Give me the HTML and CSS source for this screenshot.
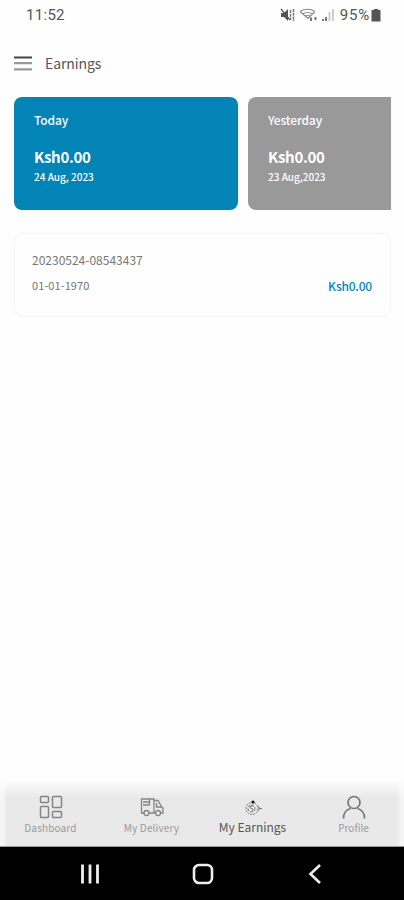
FILE: index.html
```
<!DOCTYPE html>
<html lang="en">
<head>
<meta charset="utf-8">
<title>Earnings</title>
<link rel="stylesheet" href="styles.css">
</head>
<body>
<div class="status">
  <span class="clock">11:52</span>
  <div class="indicators">
    <svg class="mute" width="16" height="14" viewBox="0 0 16 14"><path d="M1 5h3l4-4v12L4 9H1z" fill="#555"/><path d="M1 1l9 11" stroke="#555" stroke-width="1.3"/><path d="M10.500 2v10M13.500 1v12" stroke="#777" stroke-width="1.500" stroke-dasharray="3 .7"/></svg>
    <svg class="wifi" width="19" height="14" viewBox="0 0 19 14" fill="none" stroke="#888" stroke-width="1.200"><path d="M1 3.500q7.500-4.500 15 0M3.500 6q5-3 10 0M6 8.500q3-2 5 0M1 3.500l8 7 7-7"/><path d="M12 9.500v3.500M16.500 9v3" stroke="#666" stroke-width="1.800"/></svg>
    <svg class="signal" width="14" height="14" viewBox="0 0 14 14"><path d="M1 11h2v2H1zM4 9h2v4H4z" fill="#777"/><path d="M7.500 4h2v9h-2zM11 1h2v12h-2z" fill="#ccc"/></svg>
    <span class="percent">95%</span>
    <svg class="battery" width="10" height="14" viewBox="0 0 10 14"><path d="M3 1h4v1h2.500v11.500H.5V2H3z" fill="#555"/></svg>
  </div>
</div>
<header>
  <svg width="18" height="15" viewBox="0 0 18 15"><path d="M0 1.500h18" stroke="#444" stroke-width="2"/><path d="M0 7.200h18M0 13.300h18" stroke="#999" stroke-width="2.200"/></svg>
  <h1>Earnings</h1>
</header>
<main>
  <div class="cards">
    <section class="card today"><p class="day">Today</p><p class="amount">Ksh0.00</p><p class="date">24 Aug, 2023</p></section>
    <section class="card yesterday"><p class="day">Yesterday</p><p class="amount">Ksh0.00</p><p class="date">23 Aug,2023</p></section>
  </div>
  <section class="entry">
    <p class="ref">20230524-08543437</p>
    <div class="line"><span class="when">01-01-1970</span><span class="sum">Ksh0.00</span></div>
  </section>
</main>
<nav class="tabs">
  <div class="tab"><svg width="24" height="24" viewBox="0 0 24 24" fill="none" stroke="#858585" stroke-width="1.500"><rect x="1.500" y="1.500" width="8" height="6" rx="1"/><rect x="13.500" y="1.500" width="9" height="11" rx="1"/><rect x="1.500" y="11.500" width="8" height="11" rx="1"/><rect x="13.500" y="16.500" width="9" height="6" rx="1"/></svg><span>Dashboard</span></div>
  <div class="tab"><svg width="24" height="24" viewBox="0 0 24 24" fill="none" stroke="#858585" stroke-width="1.300"><path d="M4 18H1.500V4H14v14H9M14 5.500h4l3.500 6 1.500 1.500V18h-2M14 18h2M16.500 8v4h5M3 7h6.500M3 10h6.500M9.500 4v6"/><circle cx="6.500" cy="18" r="2.500"/><circle cx="18" cy="18" r="2.500"/></svg><span class="delivery">My Delivery</span></div>
  <div class="tab active"><svg width="24" height="24" viewBox="0 0 24 24" fill="none" stroke="#777"><circle cx="11" cy="13.500" r="6" stroke-dasharray="2 1"/><circle cx="10.500" cy="13.500" r="3.500" stroke-dasharray="3 1"/><path d="M12 11q-3-.5-3 1t2 1.500 0 3M16.500 11.500l3 2-3 2M18.500 13.500h2.500"/><circle cx="12" cy="7" r="1.600" fill="#111" stroke="none"/></svg><span>My Earnings</span></div>
  <div class="tab"><svg width="24" height="24" viewBox="0 0 24 24" fill="none" stroke="#777" stroke-width="1.700"><circle cx="12" cy="7.500" r="6"/><path d="M1.500 23.500c0-6 3-9 7-10M22.500 23.500c0-6-3-9-7-10"/></svg><span>Profile</span></div>
</nav>
<div class="system">
  <svg width="20" height="20" viewBox="0 0 20 20"><path d="M2.500.5v19M10 .5v19M17.500.5v19" stroke="#eee" stroke-width="2.800"/></svg>
  <svg width="22" height="22" viewBox="0 0 22 22"><rect x="2" y="2" width="18" height="18" rx="5" fill="none" stroke="#eee" stroke-width="2.600"/></svg>
  <svg width="14" height="20" viewBox="0 0 14 20"><path d="M12 1L2.500 10l9.500 9" fill="none" stroke="#eee" stroke-width="2.600"/></svg>
</div>
</body>
</html>
```
FILE: styles.css
```
* { box-sizing: border-box; margin: 0; padding: 0; }
body { width: 404px; height: 900px; display: flex; flex-direction: column; overflow: hidden; background: #fefefe; font-family: "Noto Sans CJK SC", "Noto Sans", sans-serif; color: #555; white-space: nowrap; }
svg { display: block; flex: none; }
.status { height: 30px; padding: 0 23px 0 26px; display: flex; justify-content: space-between; align-items: center; font-family: Roboto, sans-serif; font-size: 15px; letter-spacing: .3px; }
.indicators { display: flex; align-items: center; }
.indicators svg { margin-top: -1px; }
.wifi { margin-left: 3px; }
.signal { margin-left: 3px; }
.percent { margin-left: 5px; letter-spacing: .8px; }
.battery { margin-left: 1px; }
header { height: 67px; padding: 0 14px; display: flex; align-items: center; gap: 13px; }
h1 { margin-top: -2px; font-size: 14px; line-height: 20px; font-weight: 400; letter-spacing: -.1px; }
main { flex: 1; padding: 0 13px 0 14px; }
.cards { display: flex; gap: 10px; overflow: hidden; }
.card { flex: none; width: 224px; height: 113px; border-radius: 8px; padding: 13px 20px 0; color: #fff; }
.today { background: #0284b7; }
.yesterday { background: #999; }
.day { font-size: 12px; line-height: 20px; font-weight: 500; letter-spacing: -.15px; }
.amount { margin-top: 16px; font-size: 15px; line-height: 22px; font-weight: 700; letter-spacing: -.3px; }
.date { font-size: 10px; line-height: 18px; font-weight: 500; }
.entry { margin-top: 23px; height: 84px; border: 1px solid #f5f5f5; border-radius: 9px; padding: 16px 18px 0 17px; box-shadow: 0 0 2px #f7f7f7; }
.ref { font-size: 12px; line-height: 20px; color: #777; }
.line { margin-top: 6px; display: flex; justify-content: space-between; line-height: 20px; }
.when { margin-top: -1px; font-size: 11px; color: #777; letter-spacing: .1px; }
.sum { font-size: 12px; font-weight: 500; color: #0284b7; letter-spacing: -.2px; }
.tabs { height: 67px; padding-top: 15px; display: grid; grid-template-columns: repeat(4, 101px); background: linear-gradient(#fefefe, rgba(245,245,245,0) 18px), linear-gradient(90deg, #f5f5f5 3px, #e9e9e9 7px, #e9e9e9 397px, #f5f5f5 401px); border-bottom: 1px solid #999; }
.tab { display: flex; flex-direction: column; align-items: center; font-size: 10px; line-height: 20px; color: #999; }
.tab span { margin-top: -1px; }
.tab:first-child span, .delivery { letter-spacing: .15px; }
.tab.active { color: #555; font-size: 12px; }
.tab.active span { margin-top: -2px; }
.system { height: 53px; background: #000; display: flex; align-items: center; padding-left: 80px; }
.system svg:nth-child(2) { margin-left: 92px; }
.system svg:nth-child(3) { margin-left: 94px; }
```
